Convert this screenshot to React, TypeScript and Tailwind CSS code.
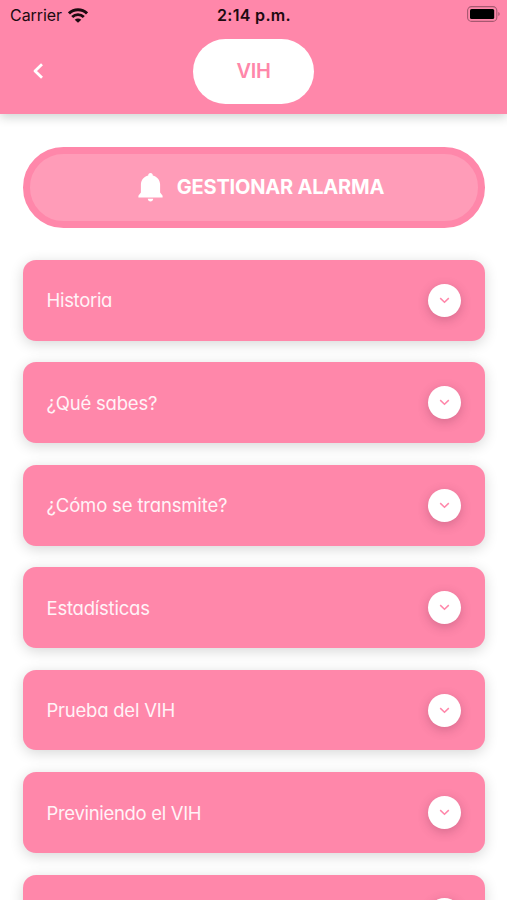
const items = [
  { text: 'Historia', tracking: 'tracking-[-0.3px]' },
  { text: '¿Qué sabes?', tracking: 'tracking-[-0.2px]' },
  { text: '¿Cómo se transmite?', tracking: 'tracking-[-0.16px]' },
  { text: 'Estadísticas', tracking: 'tracking-[-0.22px]' },
  { text: 'Prueba del VIH', tracking: 'tracking-[-0.23px]' },
  { text: 'Previniendo el VIH', tracking: 'tracking-[-0.32px]' },
  { text: '', tracking: '' },
];

function Wifi() {
  return (
    <svg width="20" height="15" viewBox="0 0 20 15" fill="none" stroke="#1c0a10" strokeWidth="2.9">
      <path d="M1 5.4C6 .5 14 .5 19 5.4" />
      <path d="M4.2 9C7.5 5.8 12.5 5.8 15.8 9" />
      <path d="M10 14.8L6.7 11.7C8.7 10 11.3 10 13.3 11.7Z" fill="#1c0a10" stroke="none" />
    </svg>
  );
}

function Battery() {
  return (
    <svg width="33" height="16" viewBox="0 0 33 16">
      <rect x=".6" y=".6" width="29.2" height="14.8" rx="4" fill="none" stroke="#a65870" strokeWidth="1.1" />
      <rect x="3" y="3" width="24.2" height="10" rx="1.6" fill="#000" />
      <path d="M31.3 6q1.4.5 1.4 2T31.3 10Z" fill="#a65870" />
    </svg>
  );
}

export default function App() {
  return (
    <div className="h-[900px] w-[507px] overflow-hidden bg-white font-['Inter',sans-serif]">
      <header className="relative flex h-[114px] flex-col bg-[#ff87aa] shadow-[0_3px_10px_rgba(0,30,20,0.2)]">
        <div className="grid h-[30px] grid-cols-3 items-center pr-[7px] pl-[10px] text-[#1c0a10]">
          <div className="flex items-center gap-[6px]">
            <span className="text-[16px] tracking-[-0.05px]">Carrier</span>
            <Wifi />
          </div>
          <span className="pr-[2px] text-center text-[16px] font-semibold tracking-[0.3px]">2:14 p.m.</span>
          <div className="flex justify-end pb-[2px]">
            <Battery />
          </div>
        </div>
        <div className="grid grid-cols-3 items-center pt-[8.5px]">
          <svg className="ml-[31px]" width="13" height="18" viewBox="0 0 13 18" fill="none" stroke="white" strokeWidth="2.8" strokeLinejoin="round">
            <path d="M11 2.3L4 9L11 15.7" />
          </svg>
          <div className="flex h-[65px] w-[120.5px] items-center justify-center justify-self-center rounded-full bg-white text-[20px] font-semibold tracking-[-0.3px] text-[#ff87aa]">
            VIH
          </div>
        </div>
      </header>
      <main className="flex flex-col px-[22.5px] pt-[32.5px]">
        <button className="flex h-[81px] items-center justify-center gap-[14px] rounded-full border-[7.5px] border-[#ff87aa] bg-[#ff9cb8] pl-[15px] text-white">
          <svg width="25" height="29" viewBox="0 0 25 29" fill="white">
            <path d="M12.5 0C11 0 10.2 1 10.2 2.4C5.8 3.5 2.9 7 2.9 11.5V19.5L.4 22.8V24.5H24.6V22.8L22.1 19.5V11.5C22.1 7 19.2 3.5 14.8 2.4C14.8 1 14 0 12.5 0ZM9.8 25.8C10 27.5 11 28.6 12.5 28.6S15 27.5 15.2 25.8Z" />
          </svg>
          <span className="text-[20px] font-bold tracking-[-0.2px]">GESTIONAR ALARMA</span>
        </button>
        <div className="mt-[32.5px] flex flex-col gap-[21.75px]">
          {items.map((item, index) => (
            <section key={index} className="flex h-[80.7px] shrink-0 items-center justify-between rounded-[13px] bg-[#ff87aa] px-[24px] shadow-[0_3px_14px_rgba(0,0,0,0.16)]">
              <span className={`pt-[2px] text-[18.5px] text-[#fff3f7] [font-feature-settings:'cv11'] ${item.tracking}`}>{item.text}</span>
              <span className="flex size-[33px] items-center justify-center rounded-full bg-white shadow-[0_3px_11px_rgba(80,20,50,0.24)]">
                <svg width="11" height="7" viewBox="0 0 11 7" fill="none" stroke="#ff87aa" strokeWidth="1.5">
                  <path d="M1.2 1.1L5.5 5.2L9.8 1.1" />
                </svg>
              </span>
            </section>
          ))}
        </div>
      </main>
    </div>
  );
}
